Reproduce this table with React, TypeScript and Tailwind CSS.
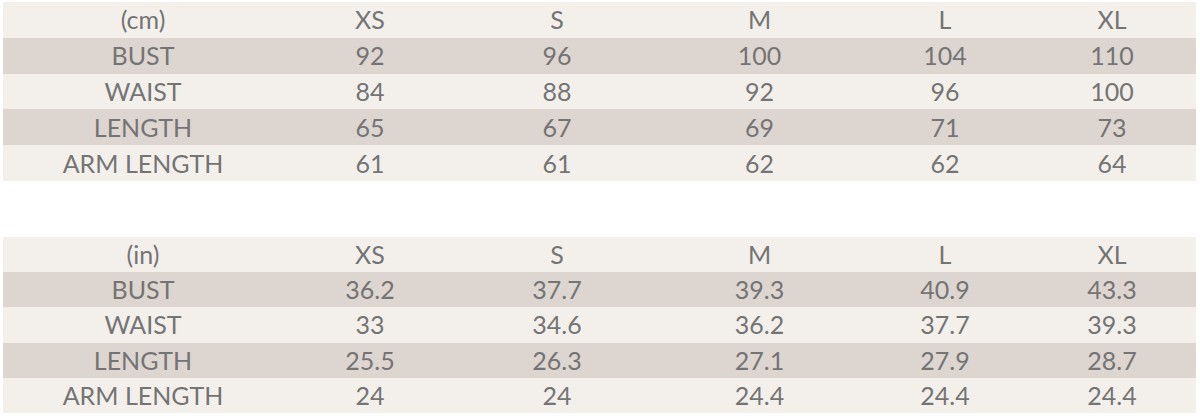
import React from 'react';

const sizes = ['XS', 'S', 'M', 'L', 'XL'];

const cmRows: [string, string[]][] = [
  ['BUST', ['92', '96', '100', '104', '110']],
  ['WAIST', ['84', '88', '92', '96', '100']],
  ['LENGTH', ['65', '67', '69', '71', '73']],
  ['ARM LENGTH', ['61', '61', '62', '62', '64']],
];

const inRows: [string, string[]][] = [
  ['BUST', ['36.2', '37.7', '39.3', '40.9', '43.3']],
  ['WAIST', ['33', '34.6', '36.2', '37.7', '39.3']],
  ['LENGTH', ['25.5', '26.3', '27.1', '27.9', '28.7']],
  ['ARM LENGTH', ['24', '24', '24.4', '24.4', '24.4']],
];

const Row = ({ cells, dark, h }: { cells: string[]; dark: boolean; h: string }) => (
  <div
    className={`grid grid-cols-[280px_174px_200px_205px_166px_168px] items-center ${h} ${
      dark ? 'bg-[#ddd5d0]' : 'bg-[#f3f0ec]'
    }`}
  >
    {cells.map((c, i) => (
      <div key={i} className="text-center leading-none">
        {c}
      </div>
    ))}
  </div>
);

const SizeTable = ({ unit, rows, h }: { unit: string; rows: [string, string[]][]; h: string }) => (
  <div className="w-[1193px]">
    <Row cells={[unit, ...sizes]} dark={false} h={h} />
    {rows.map(([label, vals], i) => (
      <Row key={label} cells={[label, ...vals]} dark={i % 2 === 0} h={h} />
    ))}
  </div>
);

export default function App() {
  return (
    <div
      className="w-[1200px] h-[418px] bg-white pl-[3px] pt-[2px] text-[25px] text-[#747474]"
      style={{ fontFamily: 'Lato, "Open Sans", sans-serif' }}
    >
      <SizeTable unit="(cm)" rows={cmRows} h="h-[35.8px]" />
      <div className="h-[56px]" />
      <SizeTable unit="(in)" rows={inRows} h="h-[35.2px]" />
    </div>
  );
}
